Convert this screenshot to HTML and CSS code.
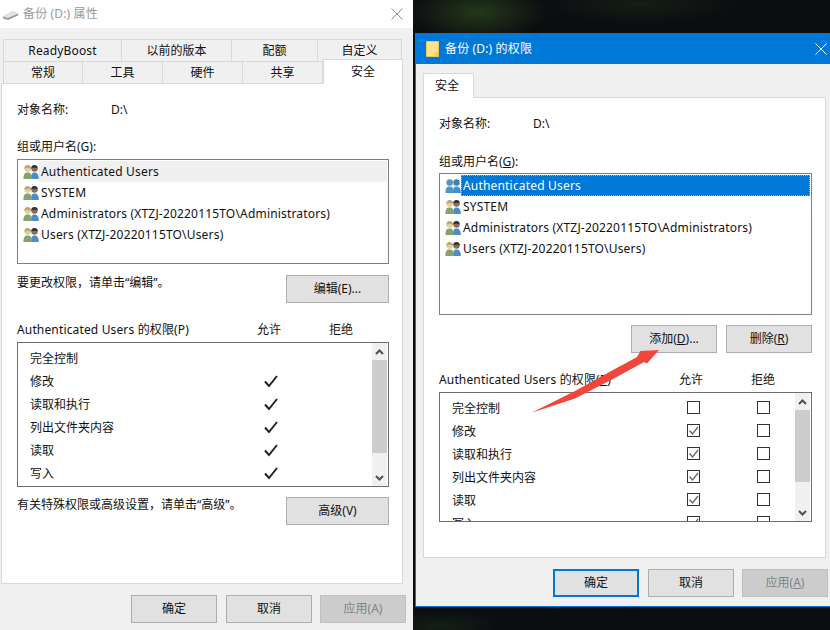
FILE: index.html
```html
<!DOCTYPE html>
<html lang="zh-CN">
<head>
<meta charset="utf-8">
<title>备份 (D:) 属性</title>
<link rel="stylesheet" href="styles.css">
</head>
<body>
<svg class="defs" width="0" height="0" aria-hidden="true">
  <symbol id="users" viewBox="0 0 16 15">
    <path d="M8 15C8 10 9 8.5 11.5 8.5S15.8 10 15.8 15Z" fill="#4d8cc6"/>
    <circle cx="11.5" cy="4.5" r="3.2" fill="#8a6f55"/>
    <path d="M8.3 4.4C8.3 2 9.8 1 11.5 1s3.2 1 3.2 3.4C13 3.4 10 3.4 8.3 4.4Z" fill="#2f3238"/>
    <path d="M.4 15C.4 10 1.8 8.5 4.6 8.5S9 10 9 15Z" fill="#84a36f"/>
    <circle cx="4.7" cy="4.6" r="3.3" fill="#e2cf9f"/>
    <path d="M1.4 5C1.3 2 3 1 4.7 1S8 2 8 5C6.5 3.6 3 3.6 1.4 5Z" fill="#b7a97c"/>
  </symbol>
  <symbol id="users-sel" viewBox="0 0 16 15">
    <path d="M8 15C8 10 9 8.5 11.5 8.5S15.8 10 15.8 15Z" fill="#3f8fd2"/>
    <circle cx="11.5" cy="4.5" r="3.2" fill="#3f7fb6"/>
    <path d="M.4 15C.4 10 1.8 8.5 4.6 8.5S9 10 9 15Z" fill="#4a9ac0"/>
    <circle cx="4.7" cy="4.6" r="3.3" fill="#5a96ba"/>
  </symbol>
  <symbol id="tick" viewBox="0 0 14 14">
    <path d="M1 7.5 5 12 13 2" fill="none" stroke="#222" stroke-width="2"/>
  </symbol>
  <symbol id="up" viewBox="0 0 9 6">
    <path d="M1 5 4.5 1.5 8 5" fill="none" stroke="#505050" stroke-width="2"/>
  </symbol>
  <symbol id="down" viewBox="0 0 9 6">
    <path d="M1 1 4.5 4.5 8 1" fill="none" stroke="#505050" stroke-width="2"/>
  </symbol>
</svg>

<div class="desktop">

  <section class="window window-props">
    <header class="title title-inactive">
      <svg class="drive-icon" viewBox="0 0 15 9" width="15" height="9"><path d="M0 5.5 9.5 0 15 2.5V4.5L5 9 0 7.500Z" fill="#9a9a9a"/><path d="M0 5.500 9.500 0 15 2.500 5 7Z" fill="#e4e4e4"/></svg>
      <span class="title-text">备份 (D:) 属性</span>
      <svg class="close" viewBox="0 0 12 12" width="12" height="12"><path d="M.5.5 11.500 11.500M11.500.5.5 11.500" stroke="#8c8c8c" fill="none"/></svg>
    </header>
    <div class="tabs">
      <div class="tab-row tab-row-top">
        <div class="tab tab-rb">ReadyBoost</div>
        <div class="tab tab-prev">以前的版本</div>
        <div class="tab tab-quota">配额</div>
        <div class="tab tab-custom">自定义</div>
      </div>
      <div class="tab-row">
        <div class="tab tab-std">常规</div>
        <div class="tab tab-std">工具</div>
        <div class="tab tab-std">硬件</div>
        <div class="tab tab-std">共享</div>
        <div class="tab tab-std tab-active">安全</div>
      </div>
    </div>
    <div class="panel panel-props">
      <div class="object"><span class="object-label">对象名称:</span><span>D:\</span></div>
      <div class="group-label">组或用户名(G):</div>
      <div class="list list-props">
        <div class="list-row list-row-hover"><svg class="user-icon"><use href="#users"/></svg><span class="list-text">Authenticated Users</span></div>
        <div class="list-row"><svg class="user-icon"><use href="#users"/></svg><span class="list-text">SYSTEM</span></div>
        <div class="list-row"><svg class="user-icon"><use href="#users"/></svg><span class="list-text">Administrators (XTZJ-20220115TO\Administrators)</span></div>
        <div class="list-row"><svg class="user-icon"><use href="#users"/></svg><span class="list-text">Users (XTZJ-20220115TO\Users)</span></div>
      </div>
      <div class="hint-row hint-row-first">
        <span>要更改权限，请单击“编辑”。</span>
        <button class="btn btn-wide">编辑(E)...</button>
      </div>
      <div class="perm-head"><span>Authenticated Users 的权限(P)</span><span class="perm-col">允许</span><span class="perm-col">拒绝</span></div>
      <div class="perms perms-props">
        <div class="perm-rows">
          <div class="perm-row"><span>完全控制</span></div>
          <div class="perm-row"><span>修改</span><svg class="tick"><use href="#tick"/></svg></div>
          <div class="perm-row"><span>读取和执行</span><svg class="tick"><use href="#tick"/></svg></div>
          <div class="perm-row"><span>列出文件夹内容</span><svg class="tick"><use href="#tick"/></svg></div>
          <div class="perm-row"><span>读取</span><svg class="tick"><use href="#tick"/></svg></div>
          <div class="perm-row"><span>写入</span><svg class="tick"><use href="#tick"/></svg></div>
        </div>
        <div class="scrollbar">
          <div class="arrow"><svg class="arrow-icon"><use href="#up"/></svg></div>
          <div class="thumb thumb-props"></div>
          <div class="track"></div>
          <div class="arrow"><svg class="arrow-icon"><use href="#down"/></svg></div>
        </div>
      </div>
      <div class="hint-row hint-row-second">
        <span>有关特殊权限或高级设置，请单击“高级”。</span>
        <button class="btn btn-wide">高级(V)</button>
      </div>
    </div>
    <footer class="footer">
      <button class="btn">确定</button>
      <button class="btn">取消</button>
      <button class="btn btn-disabled">应用(A)</button>
    </footer>
  </section>

  <section class="window window-perm">
    <header class="title title-active">
      <svg class="folder-icon" viewBox="0 0 13 16" width="13" height="16"><path d="M.5.5H12.500V15.500H.5Z" fill="#ffe28f" stroke="#eec558"/><path d="M9.500 11H12.500V15.500H9.500Z" fill="#f3c95c"/></svg>
      <span class="title-text">备份 (D:) 的权限</span>
      <svg class="close" viewBox="0 0 12 12" width="12" height="12"><path d="M.5.5 11.500 11.500M11.500.5.5 11.500" stroke="#fff" fill="none"/></svg>
    </header>
    <div class="tabs tabs-single">
      <div class="tab tab-active tab-solo">安全</div>
    </div>
    <div class="panel panel-perm">
      <div class="object"><span class="object-label">对象名称:</span><span>D:\</span></div>
      <div class="group-label group-label-perm">组或用户名(<u>G</u>):</div>
      <div class="list list-perm">
        <div class="list-row list-row-selected"><svg class="user-icon"><use href="#users-sel"/></svg><span class="list-text">Authenticated Users</span></div>
        <div class="list-row"><svg class="user-icon"><use href="#users"/></svg><span class="list-text">SYSTEM</span></div>
        <div class="list-row"><svg class="user-icon"><use href="#users"/></svg><span class="list-text">Administrators (XTZJ-20220115TO\Administrators)</span></div>
        <div class="list-row"><svg class="user-icon"><use href="#users"/></svg><span class="list-text">Users (XTZJ-20220115TO\Users)</span></div>
      </div>
      <div class="action-row">
        <button class="btn">添加(<u>D</u>)...</button>
        <button class="btn">删除(<u>R</u>)</button>
      </div>
      <div class="perm-head"><span>Authenticated Users 的权限(<u>P</u>)</span><span class="perm-col">允许</span><span class="perm-col">拒绝</span></div>
      <div class="perms perms-perm">
        <div class="perm-rows">
          <div class="perm-row"><span>完全控制</span><span class="cb"></span><span class="cb"></span></div>
          <div class="perm-row"><span>修改</span><span class="cb"><svg class="cb-tick" viewBox="0 0 11 11"><path d="M1.500 5.500 4.500 9 10 2" fill="none" stroke="#666" stroke-width="1.300"/></svg></span><span class="cb"></span></div>
          <div class="perm-row"><span>读取和执行</span><span class="cb"><svg class="cb-tick" viewBox="0 0 11 11"><path d="M1.500 5.500 4.500 9 10 2" fill="none" stroke="#666" stroke-width="1.300"/></svg></span><span class="cb"></span></div>
          <div class="perm-row"><span>列出文件夹内容</span><span class="cb"><svg class="cb-tick" viewBox="0 0 11 11"><path d="M1.500 5.500 4.500 9 10 2" fill="none" stroke="#666" stroke-width="1.300"/></svg></span><span class="cb"></span></div>
          <div class="perm-row"><span>读取</span><span class="cb"><svg class="cb-tick" viewBox="0 0 11 11"><path d="M1.500 5.500 4.500 9 10 2" fill="none" stroke="#666" stroke-width="1.300"/></svg></span><span class="cb"></span></div>
          <div class="perm-row"><span>写入</span><span class="cb"><svg class="cb-tick" viewBox="0 0 11 11"><path d="M1.500 5.500 4.500 9 10 2" fill="none" stroke="#666" stroke-width="1.300"/></svg></span><span class="cb"></span></div>
        </div>
        <div class="scrollbar">
          <div class="arrow"><svg class="arrow-icon"><use href="#up"/></svg></div>
          <div class="thumb thumb-perm"></div>
          <div class="track"></div>
          <div class="arrow"><svg class="arrow-icon"><use href="#down"/></svg></div>
        </div>
      </div>
    </div>
    <footer class="footer footer-perm">
      <button class="btn btn-default">确定</button>
      <button class="btn">取消</button>
      <button class="btn btn-disabled">应用(<u>A</u>)</button>
    </footer>
  </section>

  <svg class="annotation" viewBox="0 0 830 630" width="830" height="630" aria-hidden="true">
    <path d="M531.500 412.800 575 391 613 370 637 357 640.500 351 659 350 647 363.500 644 362 613 379 575 398.500Z" fill="#f0463c"/>
  </svg>
</div>
</body>
</html>
```

FILE: styles.css
```css
* { box-sizing: border-box; }

html, body {
  margin: 0;
  padding: 0;
  overflow: hidden;
}

body {
  font-family: "Noto Sans", "Noto Sans CJK SC", sans-serif;
  font-size: 12px;
  line-height: 16px;
  color: #111;
}

.defs { position: absolute; }

.desktop {
  position: relative;
  width: 830px;
  height: 630px;
  overflow: hidden;
  background:
    radial-gradient(ellipse 70px 30px at 478px 12px, rgba(56, 92, 34, .55), transparent),
    radial-gradient(ellipse 100px 20px at 640px 4px, rgba(40, 60, 30, .35), transparent),
    radial-gradient(ellipse 60px 16px at 440px 626px, rgba(30, 60, 30, .4), transparent),
    #0b0d10;
}

.window {
  position: absolute;
  background: #f0f0f0;
  display: flex;
  flex-direction: column;
}

.window-props { left: 0; top: 0; width: 413px; height: 630px; }

.window-perm {
  left: 415px;
  top: 33px;
  width: 416px;
  height: 574px;
  border-left: 1px solid #0078d7;
  border-bottom: 1px solid #0078d7;
}

.title {
  display: flex;
  align-items: center;
  flex: none;
  letter-spacing: .15px;
}

.title-inactive {
  height: 28px;
  background: #fff;
  color: #9a9a9a;
  padding: 0 10px 0 3px;
}

.title-active {
  height: 31px;
  background: #0078d7;
  color: #fff;
  padding: 0 4px 0 10px;
}

.drive-icon { margin: 3px 5px 0 0; flex: none; }
.folder-icon { margin-right: 6px; flex: none; }
.title-text { flex: 1; }
.close { flex: none; }

.tabs { padding: 11px 0 0 3px; flex: none; }
.tabs-single { padding: 9px 0 0 7px; height: 34px; }

.tab-row { display: flex; height: 22px; }

.tab {
  display: flex;
  align-items: center;
  justify-content: center;
  background: #f0f0f0;
  border: 1px solid #d9d9d9;
  border-bottom: 0;
  border-left-width: 0;
}

.tab:first-child { border-left-width: 1px; }

.tab-rb { width: 119px; letter-spacing: .15px; }
.tab-prev { width: 110px; }
.tab-quota { width: 86px; }
.tab-custom { width: 84px; }
.tab-std { width: 80px; }

.tab-active {
  background: #fff;
  position: relative;
  z-index: 1;
}

.tab-row .tab-active {
  height: 25px;
  margin-top: -2px;
  border-left-width: 1px;
}

.tab-solo {
  width: 51px;
  height: 25px;
  border-left-width: 1px;
  border-right-width: 1px;
  padding-right: 3px;
}

.panel {
  background: #fff;
  border: 1px solid #d9d9d9;
  flex: none;
  padding: 18px 13px 0 15px;
}

.panel-props { width: 402px; height: 501px; margin-left: 1px; }
.panel-perm { width: 403px; height: 461px; margin: -1px 0 0 7px; }

.object { display: flex; }
.object-label { width: 94px; }

.group-label { margin-top: 21px; }
.group-label-perm { margin-top: 22px; }

.list {
  border: 1px solid #7f7f7f;
  padding: 1px;
  background: #fff;
}

.list-props { height: 105px; margin-top: 4px; }
.list-perm { height: 142px; margin-top: 3px; }

.list-row {
  display: flex;
  align-items: center;
  height: 21px;
  padding-left: 4px;
}

.user-icon { width: 16px; height: 15px; flex: none; }

.list-text {
  flex: 1;
  align-self: stretch;
  display: flex;
  align-items: center;
  padding-left: 2px;
  letter-spacing: .18px;
}

.list-row-hover .list-text { background: #efefef; }

.list-row-selected .list-text {
  background: #0078d7;
  color: #fff;
  outline: 1px dotted #f0a040;
  outline-offset: -1px;
}

.hint-row {
  display: flex;
  justify-content: space-between;
  align-items: flex-start;
}

.hint-row-first { margin-top: 11px; }
.hint-row-second { margin-top: 10px; }

.action-row {
  display: flex;
  justify-content: flex-end;
  gap: 9px;
  margin-top: 10px;
}

.btn {
  width: 86px;
  height: 28px;
  padding: 0;
  font: inherit;
  color: inherit;
  background: #e1e1e1;
  border: 1px solid #adadad;
  border-radius: 0;
  flex: none;
}

.btn-wide { width: 103px; }

.btn-default { border: 2px solid #0078d7; }

.btn-disabled {
  background: #ccc;
  border-color: #bfbfbf;
  color: #838383;
}

.perm-head {
  display: grid;
  grid-template-columns: 216px 72px 72px;
  margin-top: 19px;
}

.perm-head > span:first-child {
  white-space: nowrap;
  letter-spacing: .15px;
}

.perm-col { text-align: center; }

.perms {
  display: flex;
  margin-top: 4px;
  border: 1px solid #6d6d6d;
  overflow: hidden;
  background: #fff;
}

.perms-props { height: 145px; }
.perms-perm { height: 130px; }

.perm-rows {
  flex: 1;
  padding: 3px 0 0 12px;
  overflow: hidden;
}

.perm-row {
  display: grid;
  grid-template-columns: 206px 70px 70px;
  align-items: center;
  justify-items: center;
  height: 23px;
}

.perm-row > span:first-child {
  justify-self: start;
  margin-top: 2px;
}

.tick { width: 14px; height: 14px; }

.cb {
  display: block;
  width: 13px;
  height: 13px;
  border: 1px solid #333;
  background: #fff;
}

.cb-tick { display: block; width: 11px; height: 11px; }

.scrollbar {
  width: 15px;
  flex: none;
  margin-right: 1px;
  background: #f0f0f0;
  display: flex;
  flex-direction: column;
}

.arrow {
  height: 17px;
  flex: none;
  display: flex;
  align-items: center;
  justify-content: center;
}

.arrow-icon { width: 9px; height: 6px; }

.thumb { background: #cdcdcd; flex: none; }
.thumb-props { height: 93px; }
.thumb-perm { height: 72px; }
.track { flex: 1; }

.footer {
  display: flex;
  justify-content: flex-end;
  gap: 9px;
  padding: 11px 7px 0 0;
}

.footer .btn:last-child { margin-left: -1px; }

.footer-perm { padding: 11px 3px 0 0; }

.annotation {
  position: absolute;
  left: 0;
  top: 0;
  pointer-events: none;
}
```
